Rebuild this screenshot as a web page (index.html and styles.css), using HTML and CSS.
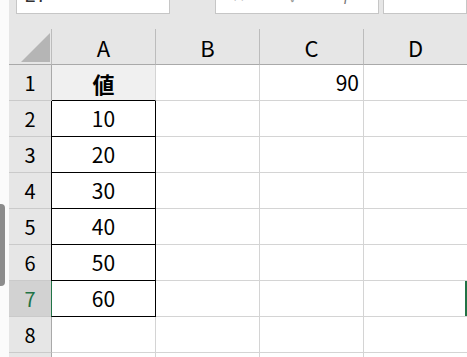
FILE: index.html
```html
<!DOCTYPE html>
<html lang="ja">
<head>
    <meta charset="UTF-8">
    <meta name="viewport" content="width=device-width, initial-scale=1.0">
    <title>Sheet</title>
    <link rel="stylesheet" href="styles.css">
</head>
<body>
    <div class="app">
        <div class="edge">
            <div class="handle"></div>
        </div>

        <div class="main">
            <div class="formula-bar">
                <div class="name-box">E7</div>
                <div class="formula-tools">
                    <span>✕</span>
                    <span>✓</span>
                    <span class="fx">fx</span>
                </div>
                <div class="formula-input"></div>
            </div>

            <div class="sheet">
                <div class="cell corner">
                    <svg width="29" height="29" viewBox="0 0 29 29">
                        <polygon points="29,0 29,29 0,29" fill="#b5b5b5"/>
                    </svg>
                </div>
                <div class="cell col-head">A</div>
                <div class="cell col-head">B</div>
                <div class="cell col-head">C</div>
                <div class="cell col-head">D</div>

                <div class="cell row-head">1</div>
                <div class="cell title">値</div>
                <div class="cell"></div>
                <div class="cell right">90</div>
                <div class="cell"></div>

                <div class="cell row-head">2</div>
                <div class="cell boxed">10</div>
                <div class="cell"></div>
                <div class="cell"></div>
                <div class="cell"></div>

                <div class="cell row-head">3</div>
                <div class="cell boxed">20</div>
                <div class="cell"></div>
                <div class="cell"></div>
                <div class="cell"></div>

                <div class="cell row-head">4</div>
                <div class="cell boxed">30</div>
                <div class="cell"></div>
                <div class="cell"></div>
                <div class="cell"></div>

                <div class="cell row-head">5</div>
                <div class="cell boxed">40</div>
                <div class="cell"></div>
                <div class="cell"></div>
                <div class="cell"></div>

                <div class="cell row-head">6</div>
                <div class="cell boxed">50</div>
                <div class="cell"></div>
                <div class="cell"></div>
                <div class="cell"></div>

                <div class="cell row-head active">7</div>
                <div class="cell boxed active-row">60</div>
                <div class="cell"></div>
                <div class="cell"></div>
                <div class="cell next-selected"></div>

                <div class="cell row-head">8</div>
                <div class="cell"></div>
                <div class="cell"></div>
                <div class="cell"></div>
                <div class="cell"></div>

                <div class="cell row-head">9</div>
                <div class="cell"></div>
                <div class="cell"></div>
                <div class="cell"></div>
                <div class="cell"></div>
            </div>
        </div>
    </div>
</body>
</html>
```

FILE: styles.css
```css
html, body {
    margin: 0;
    height: 100%;
    overflow: hidden;
}
body {
    font-family: "Noto Sans CJK JP", "Noto Sans", sans-serif;
    color: #000;
    background-color: #fff;
}
.app {
    display: flex;
    height: 100%;
}
.edge {
    width: 9px;
    flex-shrink: 0;
    background-color: #fbfbfb;
    padding-top: 204px;
    box-sizing: border-box;
}
.handle {
    width: 5px;
    height: 82px;
    background-color: #8c8c8c;
    border-radius: 0 4px 4px 0;
}
.main {
    flex: 1;
    min-width: 0;
    background-color: #e6e6e6;
}
.formula-bar {
    height: 29px;
    display: flex;
    align-items: flex-start;
    padding-left: 7px;
}
.name-box,
.formula-tools,
.formula-input {
    height: 14px;
    box-sizing: border-box;
    background-color: #fff;
    border: 1px solid #c6c6c6;
    border-top: none;
    overflow: hidden;
}
.name-box {
    width: 154px;
    margin-right: 45px;
    display: flex;
    align-items: flex-end;
    padding: 0 0 9px 7px;
    font-size: 20px;
    line-height: 20px;
    color: #333;
}
.formula-tools {
    width: 164px;
    margin-right: 4px;
    display: flex;
    align-items: flex-end;
    gap: 44px;
    padding: 0 0 10px 16px;
    font-size: 16px;
    line-height: 16px;
    color: #9a9a9a;
}
.formula-tools .fx {
    margin-left: 0;
    font-style: italic;
    font-family: "Liberation Serif", serif;
    color: #777;
}
.formula-input {
    flex: 1;
}
.sheet {
    display: grid;
    grid-template-columns: 43px repeat(4, 104px);
    grid-auto-rows: 36px;
}
.cell {
    box-sizing: border-box;
    border-right: 1px solid #d4d4d4;
    border-bottom: 1px solid #d4d4d4;
    background-color: #fff;
    display: flex;
    align-items: center;
    justify-content: center;
    font-size: 21px;
    line-height: 1;
}
.corner {
    background-color: #e6e6e6;
    border-right-color: #bcbcbc;
    border-bottom-color: #a9a9a9;
    align-items: flex-end;
    justify-content: flex-end;
    padding: 0 1px 2px 0;
}
.col-head {
    background-color: #e6e6e6;
    border-right-color: #bcbcbc;
    border-bottom-color: #a9a9a9;
    font-size: 22px;
}
.row-head {
    background-color: #e6e6e6;
    border-right-color: #a9a9a9;
    border-bottom-color: #cacaca;
    font-size: 20px;
}
.row-head.active {
    background-color: #d2d2d2;
    color: #217346;
}
.title {
    background-color: #f0f0f0;
    border-bottom-color: #000;
    font-weight: bold;
    font-size: 22px;
}
.right {
    justify-content: flex-end;
    padding-right: 4px;
}
.boxed {
    margin-left: -1px;
    border-left: 1px solid #000;
    border-right-color: #000;
    border-bottom-color: #000;
}
.boxed.active-row {
    border-left-color: #217346;
}
.next-selected {
    box-shadow: inset -2px 0 0 #217346;
}
```
